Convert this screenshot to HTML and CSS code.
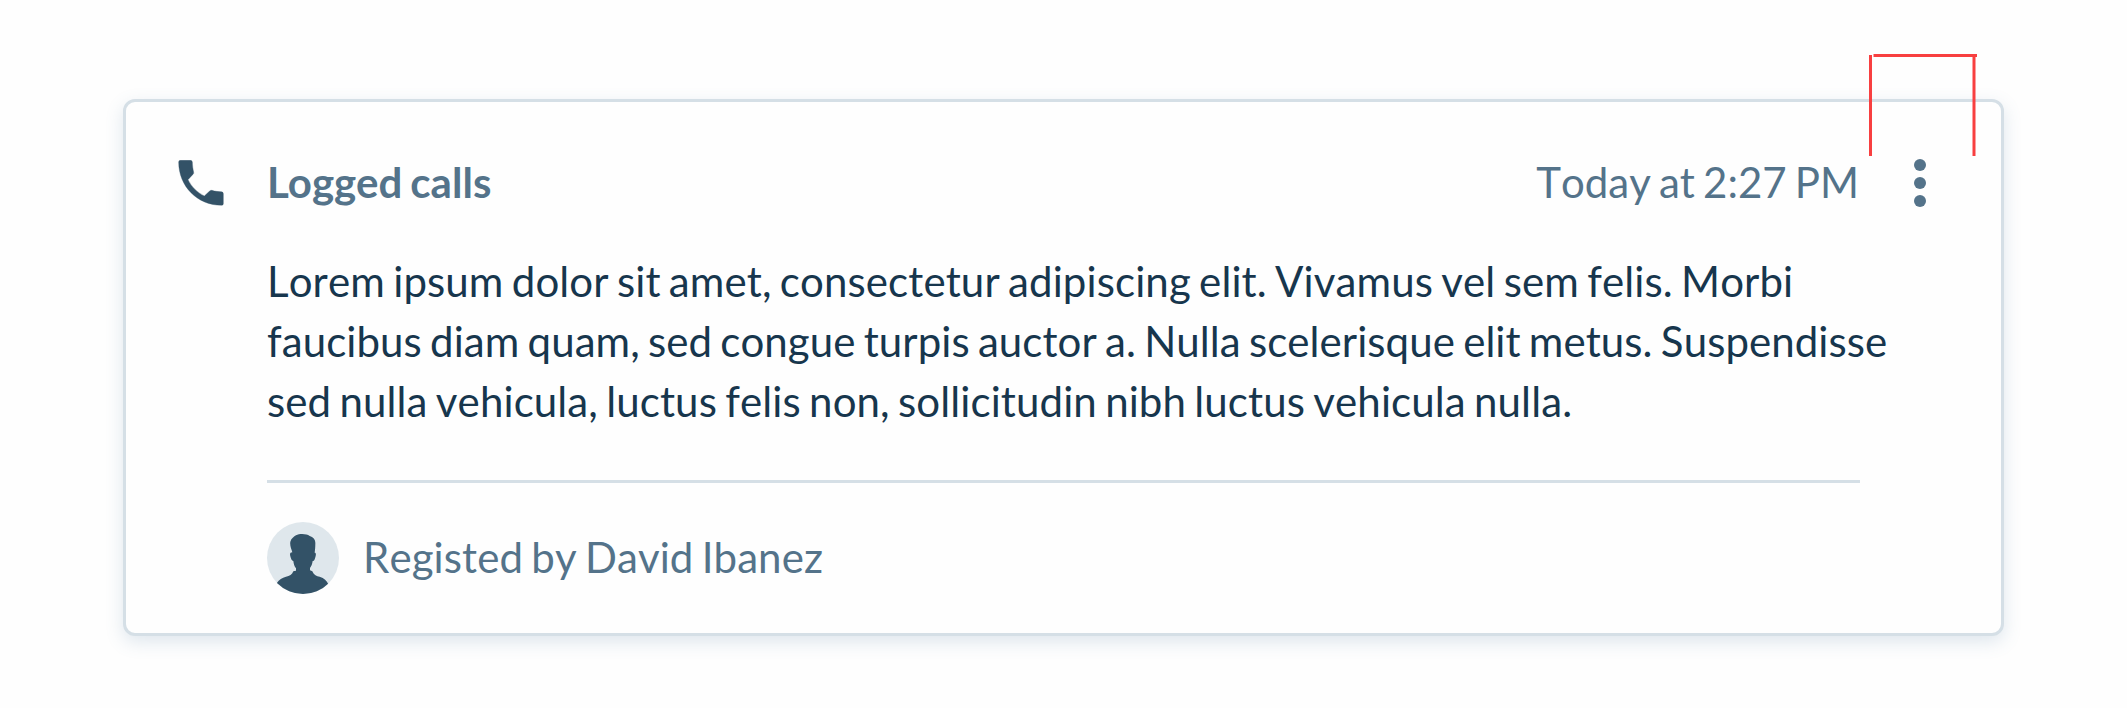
FILE: index.html
```html
<!DOCTYPE html>
<html lang="en">
<head>
<meta charset="utf-8">
<title>Logged calls</title>
<link rel="stylesheet" href="styles.css">
</head>
<body>
<article class="card">
  <svg class="call-icon" viewBox="54 60 138 138" aria-hidden="true">
    <path d="M61 61H92Q96 61 97 66C97 77 99 88 101 97Q102 101 98 104L84 119C95 141 111 157 133 168L149 153Q152 150 156 151C165 154 175 155 185 155.500Q190 156 190 161V191Q190 196 185 196C112 196 56 139 56 66Q56 61 61 61Z"/>
  </svg>
  <div class="content">
    <header class="card-header">
      <h1 class="title">Logged calls</h1>
      <time class="date">Today at 2:27 PM</time>
    </header>
    <p class="description">
      <span class="line">Lorem ipsum dolor sit amet, consectetur adipiscing elit. Vivamus vel sem felis. Morbi</span>
      <span class="line line-tight">faucibus diam quam, sed congue turpis auctor a. Nulla scelerisque elit metus. Suspendisse</span>
      <span class="line">sed nulla vehicula, luctus felis non, sollicitudin nibh luctus vehicula nulla.</span>
    </p>
    <footer class="card-footer">
      <svg class="avatar" viewBox="51 66 216 216" aria-hidden="true">
        <defs><clipPath id="round"><circle cx="159" cy="174" r="108"/></clipPath></defs>
        <circle class="avatar-back" cx="159" cy="174" r="108"/>
        <path class="avatar-person" clip-path="url(#round)" d="M127 157C124 146 119 137 121 125C124 115 132 110 138 106C149 100 170 101 179 108C190 111 197 119 196 131C196 142 195 150 194 158C199 158 198 165 196 172C194 180 192 184 188 183C187 192 184 199 180 204V211L187 214C192 226 200 229 209 230C223 234 230 242 235 253V285H80V250C88 238 96 233 108 230C119 229 126 224 130 214L138 212V205C133 199 131 191 130 183C125 183 123 177 121 169C119 162 120 157 127 157Z"/>
      </svg>
      <span class="author">Registed by David Ibanez</span>
    </footer>
  </div>
  <button class="menu" aria-label="More options">
    <span class="dot"></span><span class="dot"></span><span class="dot"></span>
  </button>
  <svg class="guide" viewBox="0 0 110 104" aria-hidden="true">
    <path d="M3.500 1V102M6.500 1.500H110M107 3V102"/>
  </svg>
</article>
</body>
</html>
```
FILE: styles.css
```css
* {
  box-sizing: border-box;
}

body {
  margin: 0;
  padding: 99px 123px 72px;
  background: #fefefe;
  font-family: Lato, sans-serif;
  font-size: 42px;
  font-kerning: none;
  line-height: 60px;
  word-spacing: -2.6px;
  color: #54738a;
}

.card {
  position: relative;
  display: flex;
  align-items: flex-start;
  height: 537px;
  padding: 50px 69px 39px 51px;
  border: 3px solid #d5dfe6;
  border-radius: 12px;
  background: #fefefe;
  box-shadow: 0 6px 18px rgba(84, 130, 165, 0.19);
}

.call-icon {
  flex: none;
  width: 46px;
  height: 46px;
  margin: 8px 43px 0 1px;
  fill: #335267;
  stroke: #335267;
  stroke-width: 1px;
}

.content {
  flex: none;
  width: 1593px;
}

.card-header {
  display: flex;
  justify-content: space-between;
}

.title {
  margin: 0;
  font-size: 42px;
  font-weight: 700;
  font-kerning: normal;
  letter-spacing: 0.1px;
}

.date {
  padding-right: 1px;
}

.description {
  margin: 39px 0 49px;
  color: #17364d;
}

.line {
  display: block;
  white-space: nowrap;
  letter-spacing: 0.11px;
}

.line-tight {
  letter-spacing: 0.07px;
}

.card-footer {
  display: flex;
  align-items: center;
  gap: 24px;
  padding-top: 39px;
  border-top: 3px solid #d5dfe6;
}

.avatar {
  width: 72px;
  height: 72px;
}

.avatar-back {
  fill: #dfe7ec;
}

.avatar-person {
  fill: #335267;
}

.author {
  padding-bottom: 2px;
  letter-spacing: 0.09px;
}

.menu {
  display: flex;
  flex: none;
  flex-direction: column;
  gap: 6px;
  margin: 7px 0 0 54px;
  padding: 0;
  border: 0;
  background: none;
}

.dot {
  width: 12px;
  height: 12px;
  border-radius: 50%;
  background: #54738a;
}

.guide {
  position: absolute;
  top: -48px;
  right: 24px;
  width: 110px;
  height: 104px;
  fill: none;
  stroke: #f83f40;
  stroke-width: 3px;
}
```
